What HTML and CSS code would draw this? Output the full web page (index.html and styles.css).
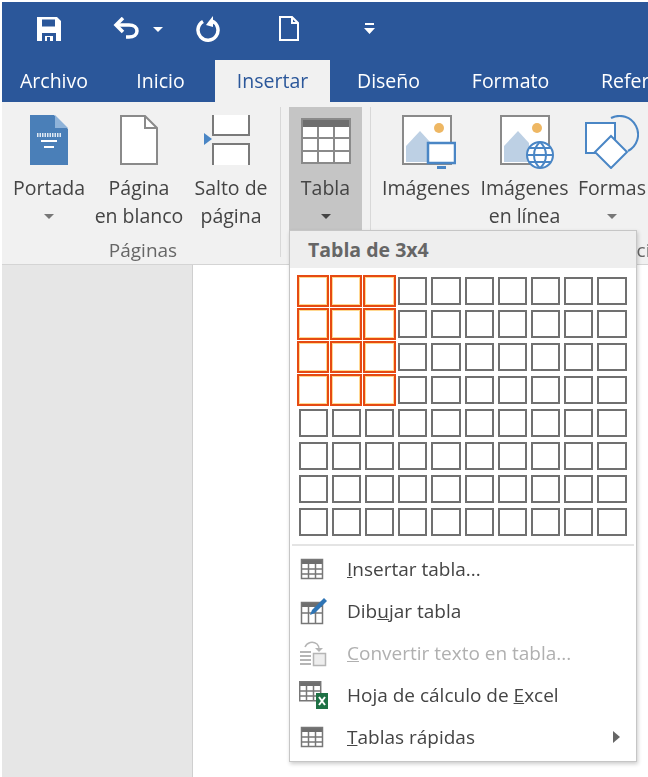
FILE: index.html
```html
<!DOCTYPE html>
<html lang="es">
<head>
    <meta charset="UTF-8">
    <title>Insertar tabla</title>
    <link rel="stylesheet" href="styles.css">
</head>
<body>
    <!-- barra de acceso rapido -->
    <div class="qat">
        <svg class="qat-save" width="26" height="26" viewBox="0 0 26 26"><path fill="#fff" d="M1 1h20l4 4v20H1z"/><path fill="#2b579a" d="M6 3.500h13v7H6zM6 17h14v8h-3v-5H9v5H6z"/><path fill="#2b579a" d="M11 21h3v4h-3z"/></svg>
        <svg class="qat-undo" width="26" height="22" viewBox="0 0 26 22"><path fill="none" stroke="#fff" stroke-width="3.500" d="M3 8h13c5 0 8 2.500 8 6s-3 6-8 6h-3"/><path fill="none" stroke="#fff" stroke-width="3.500" d="M10 1L3 8l7 7"/></svg>
        <span class="qat-caret"></span>
        <svg class="qat-redo" width="26" height="26" viewBox="0 0 26 26"><path fill="none" stroke="#fff" stroke-width="3.500" d="M8 5.500a10 10 0 1 0 9-.5"/><path fill="#fff" d="M18 0v11l-7-2 3-4z"/></svg>
        <svg class="qat-new" width="20" height="25" viewBox="0 0 20 25"><path fill="none" stroke="#fff" stroke-width="2" d="M1 1h12l6 6v17H1zM13 1v6h6"/></svg>
        <svg class="qat-more" width="11" height="12" viewBox="0 0 11 12"><path fill="#fff" d="M1 0h9v2H1zM0 5h11l-5.500 6z"/></svg>
    </div>

    <!-- pestañas -->
    <div class="tabs">
        <div class="tab tab-file">Archivo</div>
        <div class="tab tab-home">Inicio</div>
        <div class="tab tab-insert tab-active">Insertar</div>
        <div class="tab tab-design">Diseño</div>
        <div class="tab tab-format">Formato</div>
        <div class="tab tab-refs">Referencias</div>
    </div>

    <!-- cinta -->
    <div class="ribbon">
        <div class="group group-pages">
            <div class="group-btns">
                <div class="btn btn-portada">
                    <div class="btn-icon">
                        <svg width="38" height="50" viewBox="0 0 38 50"><path fill="#4a7fb8" d="M0 0h24l14 14v36H0z"/><path fill="#8fb3d9" d="M25 0l13 13H25z"/><path fill="none" stroke="#dfe9f3" stroke-width="4" stroke-dasharray="1.500 1" d="M7 20h24"/><path fill="#fff" d="M11 25h16v2H11zM14 31h10v2H14z"/></svg>
                    </div>
                    <div class="btn-text">Portada</div>
                    <span class="caret"></span>
                </div>
                <div class="btn btn-blank">
                    <div class="btn-icon">
                        <svg width="38" height="50" viewBox="0 0 38 50"><path fill="#fff" stroke="#8a8a8a" stroke-width="2" d="M1 1h24l12 12v36H1z"/><path fill="none" stroke="#8a8a8a" stroke-width="2" d="M25 1v12h12"/></svg>
                    </div>
                    <div class="btn-text">Página<br>en blanco</div>
                </div>
                <div class="btn btn-break">
                    <div class="btn-icon">
                        <svg width="46" height="50" viewBox="0 0 46 50"><path fill="#fff" d="M9 0h36v20H9zM9 29h36v21H9z"/><path fill="none" stroke="#7a7a7a" stroke-width="2" d="M9 0v20h36V0M9 50V29h36v21"/><path fill="#4a86c5" d="M0 18l8 6-8 6z"/></svg>
                    </div>
                    <div class="btn-text">Salto de<br>página</div>
                </div>
            </div>
            <div class="group-label">Páginas</div>
        </div>

        <div class="group group-table">
            <div class="group-btns">
                <div class="btn btn-table">
                    <div class="btn-icon">
                        <svg width="50" height="46" viewBox="0 0 50 46"><path fill="#fff" d="M0 0h50v46H0z"/><path fill="#6e6e6e" d="M0 0h50v9H0z"/><path fill="none" stroke="#8a8a8a" stroke-width="2" d="M1 1h48v44H1zM1 20h48M1 33h48M17 9v36M33 9v36"/></svg>
                    </div>
                    <div class="btn-text">Tabla</div>
                    <span class="caret caret-dark"></span>
                </div>
            </div>
        </div>

        <div class="group group-pics">
            <div class="group-btns">
                <div class="btn btn-pics">
                    <div class="btn-icon">
                        <svg width="54" height="54" viewBox="0 0 54 54"><path fill="#fff" stroke="#8a8a8a" stroke-width="2" d="M1 1h48v48H1z"/><circle cx="37" cy="13" r="5" fill="#eeb763"/><path fill="#bdd0e4" d="M4 47V31l14-15 11 12v19z"/><path fill="#fff" stroke="#4a86c5" stroke-width="2.500" d="M26 28h27v20H26z"/><path fill="#4a86c5" d="M35 51h9v3h-9z"/></svg>
                    </div>
                    <div class="btn-text">Imágenes</div>
                </div>
                <div class="btn btn-online">
                    <div class="btn-icon">
                        <svg width="54" height="54" viewBox="0 0 54 54"><path fill="#fff" stroke="#8a8a8a" stroke-width="2" d="M1 1h48v48H1z"/><circle cx="37" cy="13" r="5" fill="#eeb763"/><path fill="#bdd0e4" d="M4 47V31l14-15 11 12v19z"/><circle cx="40" cy="40" r="13" fill="#fff" stroke="#4a86c5" stroke-width="2"/><path fill="none" stroke="#4a86c5" stroke-width="2" d="M27 40h26M29 33h22M29 47h22M40 27c-8 7-8 19 0 26M40 27c8 7 8 19 0 26"/></svg>
                    </div>
                    <div class="btn-text">Imágenes<br>en línea</div>
                </div>
                <div class="btn btn-shapes">
                    <div class="btn-icon">
                        <svg width="54" height="54" viewBox="0 0 54 54"><path fill="none" stroke="#4a86c5" stroke-width="2" d="M26 3a17 17 0 1 1 17 33"/><path fill="#fff" stroke="#4a86c5" stroke-width="2" d="M1 8h29v30H1z"/><path fill="#fff" stroke="#4a86c5" stroke-width="2" d="M26 21l16 16-16 16-16-16z"/></svg>
                    </div>
                    <div class="btn-text">Formas</div>
                    <span class="caret"></span>
                </div>
            </div>
            <div class="group-label">Ilustraciones</div>
        </div>
    </div>

    <!-- documento -->
    <div class="doc-area">
        <div class="doc-side"></div>
        <div class="doc-page"></div>
    </div>

    <!-- menu desplegable de tabla -->
    <div class="menu">
        <div class="menu-head">Tabla de 3x4</div>
        <div class="picker" id="picker">
            <i class="on"></i><i class="on"></i><i class="on"></i><i></i><i></i><i></i><i></i><i></i><i></i><i></i>
            <i class="on"></i><i class="on"></i><i class="on"></i><i></i><i></i><i></i><i></i><i></i><i></i><i></i>
            <i class="on"></i><i class="on"></i><i class="on"></i><i></i><i></i><i></i><i></i><i></i><i></i><i></i>
            <i class="on"></i><i class="on"></i><i class="on"></i><i></i><i></i><i></i><i></i><i></i><i></i><i></i>
            <i></i><i></i><i></i><i></i><i></i><i></i><i></i><i></i><i></i><i></i>
            <i></i><i></i><i></i><i></i><i></i><i></i><i></i><i></i><i></i><i></i>
            <i></i><i></i><i></i><i></i><i></i><i></i><i></i><i></i><i></i><i></i>
            <i></i><i></i><i></i><i></i><i></i><i></i><i></i><i></i><i></i><i></i>
        </div>
        <div class="menu-sep"></div>
        <div class="menu-item">
            <svg class="item-icon" width="24" height="22" viewBox="0 0 24 22"><path fill="#fff" d="M1 1h22v20H1z"/><path fill="#6e6e6e" d="M1 1h22v5H1z"/><path fill="none" stroke="#777" stroke-width="1.500" d="M1.500 1.500h21v19h-21zM1.500 11h21M1.500 16h21M8.500 6v14M15.500 6v14"/></svg>
            <span><u>I</u>nsertar tabla...</span>
        </div>
        <div class="menu-item">
            <svg class="item-icon icon-draw" width="28" height="28" viewBox="0 0 28 28"><path fill="#fff" d="M1 5h22v22H1z"/><path fill="#6e6e6e" d="M1 5h22v5H1z"/><path fill="none" stroke="#777" stroke-width="1.500" d="M1.500 5.500h21v21h-21zM1.500 16h21M8.500 10v16M15.500 10v16"/><path fill="#2f75b5" d="M10 18l2-5L24 1l3 3-12 12z"/></svg>
            <span>Dib<u>u</u>jar tabla</span>
        </div>
        <div class="menu-item menu-off">
            <svg class="item-icon icon-draw" width="28" height="28" viewBox="0 0 28 28"><path fill="none" stroke="#b5b5b5" stroke-width="2" d="M0 13h11M0 17h11M0 21h11M0 25h11"/><path fill="none" stroke="#b5b5b5" stroke-width="1.500" d="M5 8c2-5 8-6 12-3 1 1 2 2 2 5"/><path fill="#b5b5b5" d="M15 9h8l-4 4z"/><path fill="#eee" stroke="#b5b5b5" stroke-width="1.500" d="M13.500 14.500h12v12h-12z"/></svg>
            <span><u>C</u>onvertir texto en tabla...</span>
        </div>
        <div class="menu-item">
            <svg class="item-icon icon-excel" width="30" height="30" viewBox="0 0 30 30"><path fill="#fff" d="M0 1h22v20H0z"/><path fill="#6e6e6e" d="M0 1h22v5H0z"/><path fill="none" stroke="#777" stroke-width="1.500" d="M.7 1.700h21v19H.7zM.7 11h21M.7 16h21M7.500 6v15M14.500 6v15"/><path fill="#1e7145" d="M17 13h12v16H17z"/><path fill="none" stroke="#fff" stroke-width="2" d="M20 17l6 8M26 17l-6 8"/></svg>
            <span>Hoja de cálculo de <u>E</u>xcel</span>
        </div>
        <div class="menu-item">
            <svg class="item-icon" width="24" height="22" viewBox="0 0 24 22"><path fill="#fff" d="M1 1h22v20H1z"/><path fill="#6e6e6e" d="M1 1h22v5H1z"/><path fill="none" stroke="#777" stroke-width="1.500" d="M1.500 1.500h21v19h-21zM1.500 11h21M1.500 16h21M8.500 6v14M15.500 6v14"/></svg>
            <span class="item-text"><u>T</u>ablas rápidas</span>
            <span class="item-arrow"></span>
        </div>
    </div>
</body>
</html>
```

FILE: styles.css
```css
*{
    margin: 0;
    padding: 0;
    box-sizing: border-box;
}

body{
    width: 648px;
    height: 777px;
    padding: 2px 0 0 2px;
    background-color: #fff;
    font-family: "Open Sans", "Liberation Sans", sans-serif;
    font-size: 19.5px;
    color: #444;
    overflow: hidden;
    position: relative;
    display: flex;
    flex-direction: column;
}

/* la captura original esta reescalada, un poco borrosa */
.qat, .tabs, .ribbon, .menu{
    filter: blur(0.4px);
}

/* barra de acceso rapido */
.qat{
    height: 58px;
    flex: none;
    padding-top: 14px;
    background-color: #2b579a;
    display: flex;
    align-items: flex-start;
}
.qat-save{ margin-left: 34px; }
.qat-undo{ margin-left: 51px; margin-top: 1px; }
.qat-caret{
    margin: 11px 0 0 14px;
    border-top: 5px solid #fff;
    border-left: 5px solid transparent;
    border-right: 5px solid transparent;
}
.qat-redo{ margin-left: 32px; }
.qat-new{ margin-left: 58px; }
.qat-more{ margin-left: 65px; margin-top: 7px; }

/* pestañas */
.tabs{
    height: 42px;
    flex: none;
    background-color: #2b579a;
    display: flex;
    overflow: hidden;
}
.tab{
    flex: none;
    font-size: 19.5px;
    line-height: 42px;
    text-align: center;
    color: #fff;
    white-space: nowrap;
}
.tab-file{ width: 104px; }
.tab-home{ width: 109px; }
.tab-insert{ width: 115px; }
.tab-design{ width: 117px; }
.tab-format{ width: 127px; }
.tab-refs{ width: 120px; padding-left: 27px; text-align: left; }
.tab-active{
    background-color: #f1f1f1;
    color: #2b579a;
}

/* cinta */
.ribbon{
    height: 163px;
    flex: none;
    padding-top: 5px;
    background-color: #f1f1f1;
    border-bottom: 1px solid #d4d4d4;
    display: flex;
    overflow: hidden;
}
.group{
    flex: none;
    height: 150px;
}
.group-pages{
    width: 279px;
    padding-left: 4px;
    border-right: 1px solid #d8d8d8;
}
.group-table{
    width: 90px;
    padding-left: 8px;
    border-right: 1px solid #d8d8d8;
}
.group-pics{
    width: 526px;
    padding-left: 6px;
}
.group-btns{
    display: flex;
    height: 123px;
}
.group-label{
    line-height: 40px;
    text-align: center;
    font-size: 19px;
    color: #666;
}

.btn{
    flex: none;
    text-align: center;
    line-height: 28px;
    white-space: nowrap;
}
.btn-icon{
    height: 67px;
    padding-top: 8px;
    display: flex;
    justify-content: center;
}
.btn-portada{ width: 86px; }
.btn-blank{ width: 94px; }
.btn-break{ width: 90px; }
.btn-break .btn-icon{ padding-right: 9px; }
.btn-table{ width: 73px; background-color: #c5c5c5; }
.btn-table .btn-icon{ padding-top: 11px; }
.btn-pics{ width: 98px; }
.btn-pics .btn-icon{ padding-left: 6px; }
.btn-online{ width: 99px; }
.btn-online .btn-icon{ padding-left: 4px; }
.btn-shapes{ width: 76px; }

.caret{
    display: block;
    width: 0;
    margin: 12px auto 0;
    border-top: 5px solid #777;
    border-left: 5px solid transparent;
    border-right: 5px solid transparent;
}
.caret-dark{ border-top-color: #444; }

/* documento */
.doc-area{
    flex: 1;
    display: flex;
}
.doc-side{
    width: 191px;
    background-color: #e6e6e6;
    border-right: 1px solid #cfcfcf;
}
.doc-page{
    flex: 1;
    background-color: #fff;
}

/* menu */
.menu{
    position: absolute;
    left: 289px;
    top: 230px;
    width: 348px;
    height: 532px;
    background-color: #fff;
    border: 1px solid #c6c6c6;
    box-shadow: 1px 2px 4px rgba(0, 0, 0, 0.2);
}
.menu-head{
    height: 37px;
    padding-left: 18px;
    background-color: #eee;
    font-size: 19.5px;
    font-weight: 700;
    line-height: 38px;
    color: #666;
}
.picker{
    margin: 6px 0 0 6.500px;
    width: 332px;
    height: 264px;
    display: grid;
    grid-template-columns: repeat(10, 1fr);
    grid-template-rows: repeat(8, 1fr);
}
.picker i{
    display: block;
    margin: 2.500px 2px;
    border: 2px solid #707070;
    background-color: #fff;
}
.picker i.on{
    margin: 0.500px;
    border: 2.500px solid #e64a12;
    box-shadow: inset 0 0 0 1px #ffd890;
}
.menu-sep{
    height: 2px;
    margin: 6px 2px 2px;
    background-color: #e4e4e4;
}
.menu-item{
    height: 42px;
    display: flex;
    align-items: center;
    font-size: 19px;
    color: #444;
}
.menu-off{ color: #b0b0b0; }
.item-icon{
    flex: none;
    margin-left: 10px;
    margin-right: 23px;
}
.item-icon.icon-draw{ margin-right: 19px; }
.item-icon.icon-excel{ margin-left: 9px; margin-right: 18px; }
.item-text{ flex: 1; }
.item-arrow{
    margin-right: 16px;
    border-left: 7px solid #666;
    border-top: 6px solid transparent;
    border-bottom: 6px solid transparent;
}
```
